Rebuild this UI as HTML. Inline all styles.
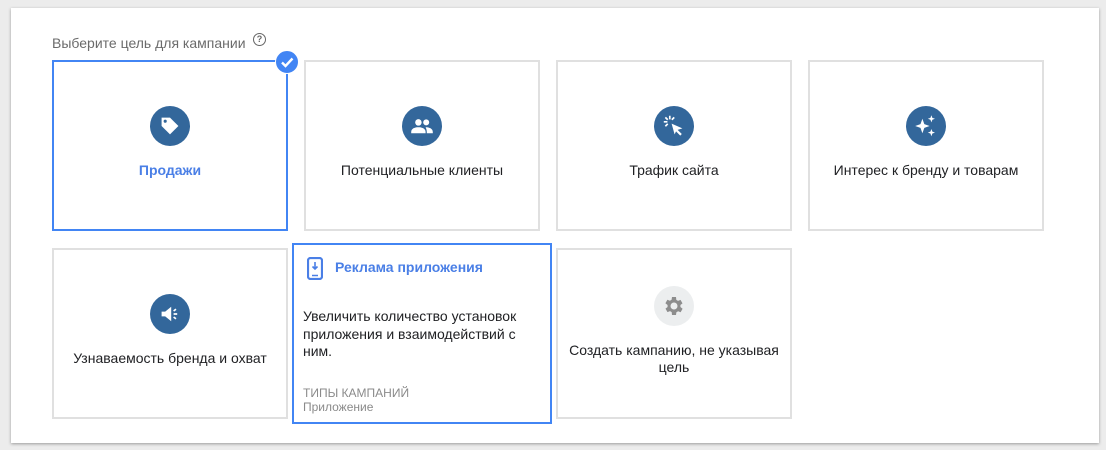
<!DOCTYPE html>
<html><head><meta charset="utf-8"><style>
body{margin:0;width:1106px;height:450px;background:#ececec;font-family:"Liberation Sans",Roboto,sans-serif;position:relative;overflow:hidden}
.panel{position:absolute;left:11px;top:8px;width:1088px;height:435px;background:#fff;box-shadow:0 1px 3px rgba(0,0,0,.35)}
.card{position:absolute;box-sizing:border-box;border:2px solid #e0e0e0;background:#fff;text-align:center;font-size:14px;color:#202124}
.sel{border:2px solid #4285f4}
.ic{position:absolute;left:50%;margin-left:-20px;width:40px;height:40px;border-radius:50%;background:#33679b}
.ic svg{position:absolute;left:8px;top:8px}
.lbl{position:absolute;left:0;right:0}
</style></head><body>
<div class="panel"></div>
<div style="position:absolute;left:52px;top:35px;font-size:14px;color:#6b6b6b">Выберите цель для кампании</div>
<div style="position:absolute;left:253px;top:33px;width:11px;height:11px;border:1.3px solid #666;border-radius:50%;font-size:9px;line-height:11px;text-align:center;color:#666;font-weight:bold">?</div>

<div class="card sel" style="left:52px;top:60px;width:236px;height:171px">
 <div class="ic" style="top:44px"><svg width="24" height="24" viewBox="0 0 20 20"><path d="M3 3h7l7 7-7 7-7-7z" fill="#fff"/><circle cx="6" cy="6" r="1.3" fill="#33679b"/></svg></div>
 <div class="lbl" style="top:100px;color:#4a7fe6;font-weight:bold">Продажи</div>
</div>
<div style="position:absolute;left:275px;top:50px;width:22px;height:22px;border-radius:50%;background:#4285f4;border:1px solid #fff"><svg width="22" height="22" viewBox="0 0 22 22"><path d="M6 11.5l3.5 3.5 7-7.5" stroke="#fff" stroke-width="2.4" fill="none"/></svg></div>

<div class="card" style="left:304px;top:60px;width:236px;height:171px">
 <div class="ic" style="top:44px"><svg width="24" height="24" viewBox="0 0 20 20"><circle cx="7" cy="7" r="2.7" fill="#fff"/><circle cx="13.5" cy="7" r="2.5" fill="#fff"/><path d="M1 15c0-3 3-4 6-4s6 1 6 4v1H1z M13 11c3 0 6 1 6 4v1h-5v-1c0-1.5-.5-3-1-4z" fill="#fff"/></svg></div>
 <div class="lbl" style="top:100px">Потенциальные клиенты</div>
</div>
<div class="card" style="left:556px;top:60px;width:236px;height:171px">
 <div class="ic" style="top:44px"><svg width="24" height="24" viewBox="0 0 20 20"><path d="M8 8l9 4-4 1.2 3.5 3.5-1.3 1.3-3.5-3.5L10.5 17z" fill="#fff"/><path d="M6.5 1.5v3M1.5 6.5h3M2.8 2.8l2 2M2.8 10.2l2-2M10.2 2.8l-2 2" stroke="#fff" stroke-width="1.4"/></svg></div>
 <div class="lbl" style="top:100px">Трафик сайта</div>
</div>
<div class="card" style="left:808px;top:60px;width:236px;height:171px">
 <div class="ic" style="top:44px"><svg width="24" height="24" viewBox="0 0 20 20"><path d="M7 4l1.6 4.4L13 10l-4.4 1.6L7 16l-1.6-4.4L1 10l4.4-1.6z M14.5 1l.8 2.2 2.2.8-2.2.8-.8 2.2-.8-2.2-2.2-.8 2.2-.8z M14.5 12.5l.8 2.2 2.2.8-2.2.8-.8 2.2-.8-2.2-2.2-.8 2.2-.8z" fill="#fff"/></svg></div>
 <div class="lbl" style="top:100px">Интерес к бренду и товарам</div>
</div>

<div class="card" style="left:52px;top:248px;width:236px;height:171px">
 <div class="ic" style="top:44px"><svg width="24" height="24" viewBox="0 0 20 20"><path d="M3 8h3l5-4v12l-5-4H3z" fill="#fff"/><path d="M13 7.5l2-1.5M13 10h3M13 12.5l2 1.5" stroke="#fff" stroke-width="1.4"/></svg></div>
 <div class="lbl" style="top:100px">Узнаваемость бренда и охват</div>
</div>
<div class="card sel" style="left:292px;top:243px;width:260px;height:181px;text-align:left">
 <svg style="position:absolute;left:13px;top:12px" width="16" height="23" viewBox="0 0 16 23"><rect x="1" y="1" width="14" height="21" rx="2.5" fill="none" stroke="#4a7fe6" stroke-width="2.2"/><path d="M8 5v7M5.5 9.5L8 12l2.5-2.5" stroke="#4a7fe6" stroke-width="1.6" fill="none"/><path d="M5 18.5h6" stroke="#4a7fe6" stroke-width="1.5"/></svg>
 <div style="position:absolute;left:41px;top:14px;color:#4a7fe6;font-weight:bold;font-size:14px">Реклама приложения</div>
 <div style="position:absolute;left:9px;top:63px;width:240px;font-size:14px;line-height:17.5px">Увеличить количество установок приложения и взаимодействий с ним.</div>
 <div style="position:absolute;left:9px;top:141px;font-size:12px;color:#8a8a8a;line-height:14px">ТИПЫ КАМПАНИЙ<br>Приложение</div>
</div>
<div class="card" style="left:556px;top:248px;width:236px;height:171px">
 <div class="ic" style="top:36px;background:#eceeef"><svg width="24" height="24" viewBox="0 0 24 24"><path fill="#8d8d8d" d="M19.4 13a7.5 7.5 0 000-2l2.1-1.6-2-3.5-2.5 1a7 7 0 00-1.7-1L15 3h-4l-.4 2.7a7 7 0 00-1.7 1l-2.5-1-2 3.5L6.6 11a7.5 7.5 0 000 2l-2.1 1.6 2 3.5 2.5-1a7 7 0 001.7 1L11 21h4l.4-2.7a7 7 0 001.7-1l2.5 1 2-3.5zM13 15.5a3.5 3.5 0 110-7 3.5 3.5 0 010 7z" transform="translate(-1 0)"/></svg></div>
 <div class="lbl" style="top:92px;line-height:17px;padding:0 8px">Создать кампанию, не указывая цель</div>
</div>
</body></html>
